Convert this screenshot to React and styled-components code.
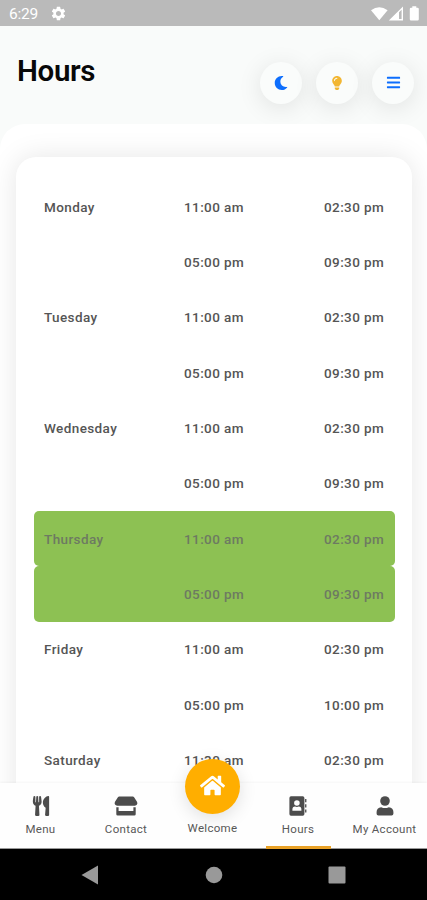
import styled, { createGlobalStyle } from "styled-components";
import {
  FaBars,
  FaHome,
  FaLightbulb,
  FaMoon,
  FaUtensils,
} from "react-icons/fa";
import { MdSettings } from "react-icons/md";

const hours = [
  { day: "Monday", open: "11:00 am", close: "02:30 pm" },
  { day: "", open: "05:00 pm", close: "09:30 pm" },
  { day: "Tuesday", open: "11:00 am", close: "02:30 pm" },
  { day: "", open: "05:00 pm", close: "09:30 pm" },
  { day: "Wednesday", open: "11:00 am", close: "02:30 pm" },
  { day: "", open: "05:00 pm", close: "09:30 pm" },
  { day: "Thursday", open: "11:00 am", close: "02:30 pm", today: true },
  { day: "", open: "05:00 pm", close: "09:30 pm", today: true },
  { day: "Friday", open: "11:00 am", close: "02:30 pm" },
  { day: "", open: "05:00 pm", close: "10:00 pm" },
  { day: "Saturday", open: "11:30 am", close: "02:30 pm" },
];

const StoreIcon = () => (
  <svg width="24" height="20" viewBox="0 0 24 20" fill="currentColor">
    <path d="M5.2 .5H18.8Q19.6 .5 20.1 1.2L23 5.8Q23.8 7.4 23 8.6Q22.3 9.7 20.8 9.7H3.2Q1.7 9.7 1 8.6Q.2 7.4 1 5.8L3.9 1.2Q4.4 .5 5.2 .5Z" />
    <path d="M2.3 11.2H4.6V14.9H19.4V11.2H21.7V18.2Q21.7 19.6 20.3 19.6H3.7Q2.3 19.6 2.3 18.2Z" />
  </svg>
);

const BookIcon = () => (
  <svg width="18" height="20" viewBox="0 0 18 20" fill="currentColor">
    <path
      fillRule="evenodd"
      d="M2 .3H13.7Q15.4 .3 15.4 2V18Q15.4 19.7 13.7 19.7H2Q.4 19.7 .4 18V2Q.4 .3 2 .3ZM7.9 4.2A2.8 2.8 0 1 0 7.9 9.8A2.8 2.8 0 1 0 7.9 4.2ZM3.4 14.8H12.4V13.5Q12.4 10.6 9.8 10.6Q7.9 11.5 6 10.6Q3.4 10.6 3.4 13.5Z"
    />
    <path d="M16.1 3H17.4V6.2H16.1ZM16.1 8.2H17.4V11.4H16.1ZM16.1 13.4H17.4V16.6H16.1Z" />
  </svg>
);

const UserIcon = () => (
  <svg width="18" height="20" viewBox="0 0 18 20" fill="currentColor">
    <circle cx="9" cy="5" r="4.8" />
    <path d="M5.2 11.2Q9 13 12.8 11.2Q17.4 11.8 17.4 16V17.8Q17.4 19.6 15.6 19.6H2.4Q.6 19.6 .6 17.8V16Q.6 11.8 5.2 11.2Z" />
  </svg>
);

const StatusBar = () => {
  return (
    <Status>
      <Clock>6:29</Clock>
      <MdSettings size={17} />
      <Signals width="50" height="16" viewBox="0 0 50 16" fill="currentColor">
        <path d="M0 4.2Q8.3-1.6 16.6 4.2L8.3 14.2Z" />
        <path
          fillRule="evenodd"
          d="M17.8 14.5L32 .5V14.5ZM28 6.3V13H30.6V3.7Z"
        />
        <path d="M41.3 1.8V.3H45.3V1.8H46.6Q47.8 1.8 47.8 3V13.3Q47.8 14.5 46.6 14.5H40Q38.8 14.5 38.8 13.3V3Q38.8 1.8 40 1.8Z" />
      </Signals>
    </Status>
  );
};

const App = () => {
  return (
    <Screen>
      <GlobalStyle />
      <StatusBar />
      <Header>
        <Title>Hours</Title>
        <Actions>
          <RoundButton aria-label="Dark mode">
            <FaMoon />
          </RoundButton>
          <RoundButton $color="#f2b632" aria-label="Highlights">
            <FaLightbulb />
          </RoundButton>
          <RoundButton $size="15px" aria-label="Open menu">
            <FaBars />
          </RoundButton>
        </Actions>
      </Header>
      <Content>
        <Card>
          {hours.map(({ day, open, close, today }, index) => (
            <Row key={index} $today={today}>
              <span>{day}</span>
              <span>{open}</span>
              <span>{close}</span>
            </Row>
          ))}
        </Card>
      </Content>
      <TabBar>
        <Tab>
          <FaUtensils size={20} />
          <Label>Menu</Label>
        </Tab>
        <Tab>
          <StoreIcon />
          <Label>Contact</Label>
        </Tab>
        <Tab>
          <HomeButton>
            <FaHome />
          </HomeButton>
          <Label $raised>Welcome</Label>
        </Tab>
        <Tab $active>
          <BookIcon />
          <Label>Hours</Label>
        </Tab>
        <Tab>
          <UserIcon />
          <Label>My Account</Label>
        </Tab>
      </TabBar>
      <SystemBar>
        <svg width="18" height="20" viewBox="0 0 18 20" fill="#999">
          <path d="M17 .5V19.5L.5 10Z" />
        </svg>
        <svg width="18" height="18" viewBox="0 0 18 18" fill="#999">
          <circle cx="9" cy="9" r="8.3" />
        </svg>
        <svg width="18" height="18" viewBox="0 0 18 18" fill="#999">
          <rect x=".5" y=".5" width="17" height="17" rx="1" />
        </svg>
      </SystemBar>
    </Screen>
  );
};

const GlobalStyle = createGlobalStyle`
  * {
    box-sizing: border-box;
  }
  body {
    margin: 0;
    font-family: Roboto, sans-serif;
  }
`;
const Screen = styled.div`
  display: flex;
  flex-direction: column;
  width: 427px;
  height: 900px;
  overflow: hidden;
  background: #f9fbfa;
`;
const Status = styled.div`
  display: flex;
  flex: 0 0 26px;
  align-items: center;
  padding: 1px 6px 0 9px;
  background: #bababa;
  color: #fff;
`;
const Clock = styled.span`
  width: 41px;
  font-size: 15.5px;
  letter-spacing: -0.2px;
`;
const Signals = styled.svg`
  margin-left: auto;
`;
const Header = styled.header`
  display: flex;
  flex: 0 0 98px;
  justify-content: space-between;
  padding: 0 13px 0 17px;
`;
const Title = styled.h1`
  margin: 27px 0 0;
  font-size: 29.5px;
  font-weight: 600;
  line-height: 36px;
  letter-spacing: -0.35px;
  color: #080808;
`;
const Actions = styled.div`
  display: flex;
  gap: 14px;
  margin-top: 36px;
`;
const RoundButton = styled.button`
  display: flex;
  align-items: center;
  justify-content: center;
  width: 42px;
  height: 42px;
  padding: 0 0 1px;
  border: 0;
  border-radius: 50%;
  background: #fafcfb;
  box-shadow: 0 4px 24px rgba(0, 0, 0, 0.1);
  color: ${({ $color }) => $color || "#0d6efd"};
  font-size: ${({ $size }) => $size || "14px"};
`;
const Content = styled.main`
  position: relative;
  flex: 1;
  min-height: 0;
  padding: 33px 15px 0 16px;
  overflow: hidden;
  border-radius: 25px 25px 0 0;
  background: #fff;
`;
const Card = styled.section`
  height: 800px;
  padding: 22px 17px 0 18px;
  border-radius: 20px;
  background: #fff;
  box-shadow: 0 0 28px rgba(0, 0, 0, 0.1);
`;
const Row = styled.div`
  display: grid;
  grid-template-columns: 140px 140px auto;
  align-items: center;
  height: 55.35px;
  padding: 0 0 0 10px;
  border-radius: 5px;
  background: ${({ $today }) => ($today ? "#8dc153" : "transparent")};
  color: ${({ $today }) => ($today ? "#6d7a62" : "#555")};
  font-size: 13.5px;
  font-weight: 500;
  letter-spacing: 0.4px;
  white-space: nowrap;
`;
const TabBar = styled.nav`
  position: relative;
  display: grid;
  flex: 0 0 66px;
  grid-template-columns: 81px 90px 83px 88px 85px;
  border-bottom: 1px solid #999;
  background: #fefefe;
  box-shadow: 0 -1px 2px rgba(0, 0, 0, 0.04);
`;
const Tab = styled.div`
  position: relative;
  display: flex;
  flex-direction: column;
  align-items: center;
  padding-top: 13px;
  color: #4c4c4c;

  > svg {
    flex-shrink: 0;
  }

  &::after {
    content: "";
    position: absolute;
    bottom: -1px;
    left: 12px;
    width: 65px;
    height: 3px;
    background: ${({ $active }) => ($active ? "#e9a126" : "transparent")};
  }
`;
const Label = styled.span`
  margin-top: ${({ $raised }) => ($raised ? "24px" : "5px")};
  font-size: 11.5px;
  line-height: 16px;
  letter-spacing: 0.3px;
  white-space: nowrap;
  color: #585858;
`;
const HomeButton = styled.div`
  position: absolute;
  top: -24px;
  display: flex;
  align-items: center;
  justify-content: center;
  width: 55px;
  height: 55px;
  padding-bottom: 2px;
  border-radius: 50%;
  background: #ffae00;
  box-shadow: 0 4px 18px rgba(0, 0, 0, 0.12);
  color: #fff;
  font-size: 25px;
`;
const SystemBar = styled.div`
  display: flex;
  flex: 0 0 51px;
  align-items: center;
  justify-content: space-between;
  padding: 0 81px;
  background: #000;
`;

export default App;
